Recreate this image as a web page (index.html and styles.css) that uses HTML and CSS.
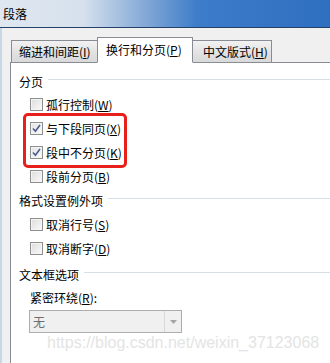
FILE: index.html
```html
<!DOCTYPE html>
<html>
<head>
<meta charset="utf-8">
<link rel="stylesheet" href="styles.css">
</head>
<body>
<div class="window">
  <div class="titlebar">段落</div>
  <div class="client">
    <div class="tabs">
      <div class="tab">缩进和间距(<u>I</u>)</div>
      <div class="tab active">换行和分页(<u>P</u>)</div>
      <div class="tab">中文版式(<u>H</u>)</div>
    </div>
    <div class="panel">
      <div class="group-title h1"><span>分页</span></div>
      <div class="row"><span class="cb"></span><span>孤行控制(<u>W</u>)</span></div>
      <div class="row"><span class="cb checked"><svg width="11" height="11" viewBox="0 0 11 11"><path d="M2 5.5 L4.4 8.2 L9 2" fill="none" stroke="#4a5c8f" stroke-width="1.6"/></svg></span><span>与下段同页(<u>X</u>)</span></div>
      <div class="row"><span class="cb checked"><svg width="11" height="11" viewBox="0 0 11 11"><path d="M2 5.5 L4.4 8.2 L9 2" fill="none" stroke="#4a5c8f" stroke-width="1.6"/></svg></span><span>段中不分页(<u>K</u>)</span></div>
      <div class="row"><span class="cb"></span><span>段前分页(<u>B</u>)</span></div>
      <div class="group-title"><span>格式设置例外项</span></div>
      <div class="row"><span class="cb"></span><span>取消行号(<u>S</u>)</span></div>
      <div class="row"><span class="cb"></span><span>取消断字(<u>D</u>)</span></div>
      <div class="group-title h3"><span>文本框选项</span></div>
      <div class="label">紧密环绕(<u>R</u>):</div>
      <div class="combo">
        <span class="combo-text">无</span>
        <span class="combo-btn"><svg width="7" height="4" viewBox="0 0 7 4"><path d="M0 0 H7 L3.5 4 Z" fill="#a5a5a5"/></svg></span>
      </div>
    </div>
  </div>
  <div class="highlight"></div>
  <div class="watermark">https://blog.csdn.net/weixin_37123068</div>
</div>
</body>
</html>
```

FILE: styles.css
```css
* { box-sizing: border-box; }
html, body { margin: 0; padding: 0; }
body {
  width: 330px;
  height: 363px;
  overflow: hidden;
  background: #f0f0f0;
  font-family: "Noto Sans CJK SC", "Microsoft YaHei", sans-serif;
  font-size: 12px;
  color: #000;
}
u { text-decoration: underline; text-underline-offset: 1px; }
.window {
  position: relative;
  width: 330px;
  height: 363px;
  overflow: hidden;
}
.titlebar {
  height: 28px;
  line-height: 28px;
  padding-left: 3px;
  font-size: 12px;
  color: #000;
  background: linear-gradient(to right, #dfe7f0 0%, #d6e1ed 25%, #7fa6d6 45%, #3d7cc9 60%, #2f6fc0 100%);
  border-bottom: 1px solid #24416a;
}
.client {
  padding-left: 8px;
  border-left: 2px solid #c8d6e6;
  height: 335px;
  display: flex;
  flex-direction: column;
}
.tabs {
  display: flex;
  align-items: flex-end;
  padding-left: 1px;
  height: 34px;
  position: relative;
  z-index: 1;
}
.tab {
  height: 22px;
  line-height: 21px;
  padding: 0 0 0 7px;
  border: 1px solid #898c95;
  border-bottom: none;
  background: linear-gradient(#f2f2f2, #e3e3e3 50%, #d9d9d9);
  margin-right: -1px;
}
.tab:nth-child(1) { width: 87px; }
.tab:nth-child(3) { width: 80px; padding-left: 10px; }
.tab.active {
  height: 26px;
  width: 96px;
  background: #fff;
  line-height: 24px;
  padding-left: 8px;
  margin-bottom: -1px;
  position: relative;
  z-index: 2;
  border-bottom: 1px solid #fff;
}
.panel {
  flex: 1;
  background: #fff;
  border-top: 1px solid #898c95;
  border-left: 1px solid #898c95;
  padding-left: 8px;
  display: flex;
  flex-direction: column;
}
.group-title {
  height: 24px;
  display: flex;
  align-items: center;
}
.group-title::after {
  content: "";
  flex: 1;
  height: 1px;
  background: #d5dfe5;
  margin-left: 5px;
  margin-top: -3px;
}
.group-title.h1 { margin-top: 7px; height: 22px; }
.group-title.h3 { margin-top: 2px; }
.row {
  height: 24px;
  display: flex;
  align-items: center;
  padding-left: 11px;
}
.cb {
  width: 13px;
  height: 13px;
  border: 1px solid #8e8f8f;
  background: linear-gradient(135deg, #dcdcdc, #fbfbfb);
  box-shadow: inset 0 0 0 1px #f4f4f4;
  margin-right: 3px;
  display: flex;
  align-items: center;
  justify-content: center;
}
.cb.checked { background: linear-gradient(135deg, #e4e4e4, #fbfbfb); }
.label {
  height: 24px;
  line-height: 24px;
  padding-left: 11px;
}
.combo {
  width: 153px;
  height: 23px;
  margin-left: 10px;
  border: 1px solid #adadad;
  background: #f0f0f0;
  display: flex;
  align-items: center;
}
.combo-text {
  flex: 1;
  padding-left: 3px;
  color: #6d6d6d;
}
.combo-btn {
  width: 17px;
  height: 100%;
  border-left: 1px solid #d9d9d9;
  display: flex;
  align-items: center;
  justify-content: center;
}
.highlight {
  position: absolute;
  left: 23px;
  top: 113px;
  width: 104px;
  height: 55px;
  border: 3px solid #e8201b;
  border-radius: 5px;
}
.watermark {
  position: absolute;
  left: 47px;
  top: 334px;
  font-family: "Liberation Sans", Arial, sans-serif;
  font-size: 16px;
  color: #e4e4e4;
  white-space: nowrap;
}
```
